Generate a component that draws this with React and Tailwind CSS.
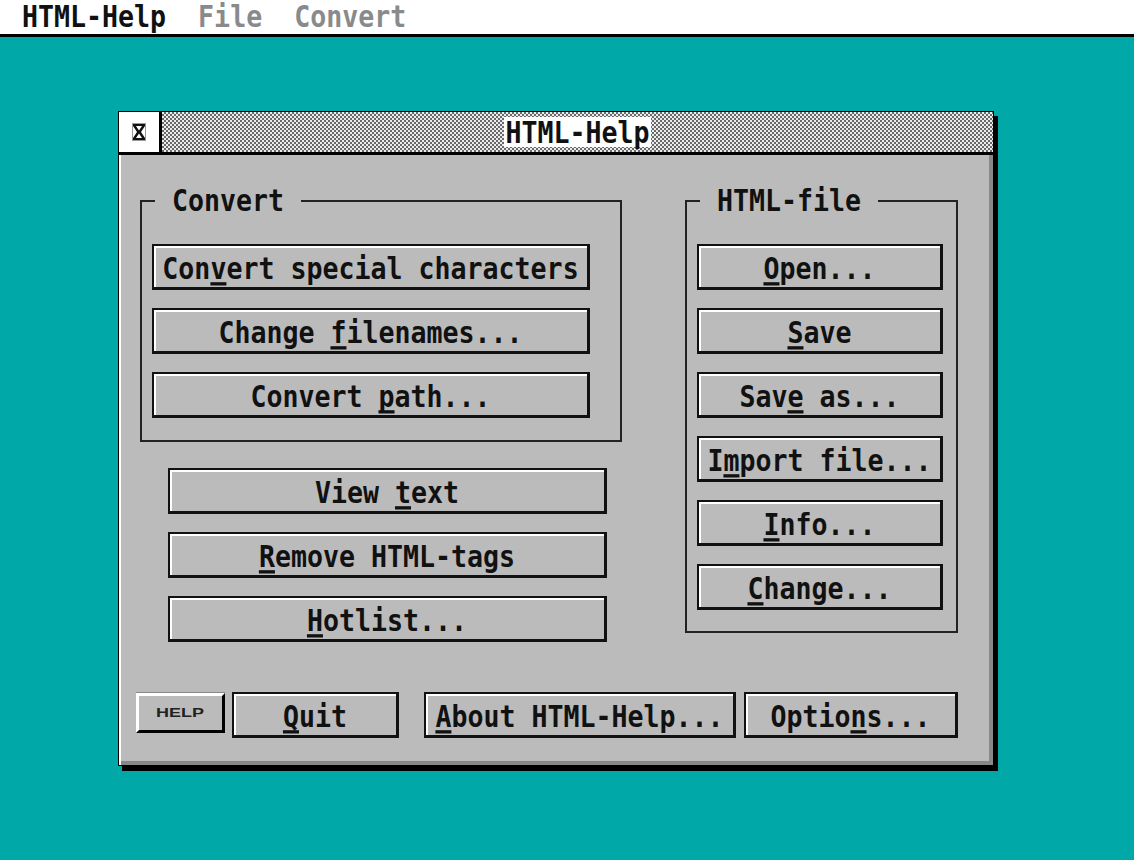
import React from 'react';

const font = "font-['DejaVu_Sans_Mono',monospace] font-bold text-[26.6px]";

function Txt({ text, u = -1 }) {
  const before = u >= 0 ? text.slice(0, u) : text;
  const ch = u >= 0 ? text[u] : '';
  const after = u >= 0 ? text.slice(u + 1) : '';
  return (
    <span className={`${font} inline-block scale-y-110 leading-[28px] whitespace-pre text-[#111]`}>
      {before}
      {ch && (
        <span className="underline decoration-[3px] underline-offset-[3px] [text-decoration-skip-ink:none]">{ch}</span>
      )}
      {after}
    </span>
  );
}

function Btn({ text, u, className = '' }) {
  return (
    <div
      className={`h-[46px] bg-[#bbbbbb] border-[#111] border-t-2 border-l-2 border-r-[3px] border-b-[3px] shadow-[inset_2px_2px_0_#fff] flex items-center justify-center pt-[4px] ${className}`}
    >
      <Txt text={text} u={u} />
    </div>
  );
}

function Group({ label, className = '', children }) {
  return (
    <fieldset className={`border-2 border-[#222] pl-[10px] ${className}`}>
      <legend className="ml-[3px] px-[17px] h-[28px]">
        <Txt text={label} />
      </legend>
      {children}
    </fieldset>
  );
}

function CloseGlyph() {
  return (
    <svg width="14" height="18" viewBox="0 0 14 18">
      <rect x="0.5" y="0.5" width="13" height="17" fill="none" stroke="#999" strokeWidth="1" />
      <path d="M1 1h12v2l-4 6 4 6v2H1v-2l4-6-4-6z" fill="#111" />
      <path d="M4 3h6l-3 4.5z M4 15h6l-3-4.5z" fill="#fff" />
    </svg>
  );
}

export default function App() {
  return (
    <div className="min-h-screen h-[860px] bg-[#00a8a8] overflow-hidden">
      <div className="h-[37px] bg-white border-b-[3px] border-black flex items-center pl-[22px]">
        <Txt text="HTML-Help" />
        <span className="ml-[32px]">
          <span className={`${font} inline-block scale-y-110 leading-[28px] text-[#8a8a8a]`}>File</span>
        </span>
        <span className="ml-[32px]">
          <span className={`${font} inline-block scale-y-110 leading-[28px] text-[#8a8a8a]`}>Convert</span>
        </span>
      </div>

      <div className="ml-[118px] mt-[74px] w-[876px] h-[655px] border border-black shadow-[4px_5px_0_#000] flex flex-col">
        <div className="h-[43px] flex border-b-[3px] border-black">
          <div className="w-[43px] bg-white border-r-[3px] border-black flex items-center justify-center">
            <CloseGlyph />
          </div>
          <div className="flex-1 flex items-center justify-center bg-[repeating-conic-gradient(#6a6a6a_0_25%,#ececec_0_50%)] bg-[length:4px_4px]">
            <div className="h-[30px] bg-white px-[1px] flex items-center pt-[2px]">
              <Txt text="HTML-Help" />
            </div>
          </div>
        </div>

        <div className="flex-1 bg-[#bbbbbb] shadow-[inset_2px_0_0_#fff,inset_-4px_-4px_0_#888] pl-[17px] pt-[32px]">
          <div className="flex ml-[4px]">
            <div className="w-[482px]">
              <Group label="Convert" className="pt-[29px] pb-[22px]">
                <div className="flex flex-col gap-[18px] w-[438px]">
                  <Btn text="Convert special characters" u={3} />
                  <Btn text="Change filenames..." u={7} />
                  <Btn text="Convert path..." u={8} />
                </div>
              </Group>
              <div className="flex flex-col gap-[18px] w-[439px] ml-[28px] mt-[26px]">
                <Btn text="View text" u={5} />
                <Btn text="Remove HTML-tags" u={0} />
                <Btn text="Hotlist..." u={0} />
              </div>
            </div>
            <div className="ml-[63px] w-[273px]">
              <Group label="HTML-file" className="pt-[29px] pb-[21px]">
                <div className="flex flex-col gap-[18px] w-[246px]">
                  <Btn text="Open..." u={0} />
                  <Btn text="Save" u={0} />
                  <Btn text="Save as..." u={3} />
                  <Btn text="Import file..." u={1} />
                  <Btn text="Info..." u={0} />
                  <Btn text="Change..." u={0} />
                </div>
              </Group>
            </div>
          </div>

          <div className="flex items-start mt-[50px]">
            <div className="mt-[1px] w-[89px] h-[40px] bg-[#bbbbbb] border-t-[3px] border-l-[3px] border-white border-r-[3px] border-b-[3px] border-r-black border-b-black shadow-[0_-1px_0_#888] flex items-center justify-center">
              <span className="inline-block scale-x-150 font-['Liberation_Sans',sans-serif] font-bold text-[12px] leading-none text-[#222]">
                HELP
              </span>
            </div>
            <Btn text="Quit" u={0} className="ml-[7px] w-[167px]" />
            <Btn text="About HTML-Help..." u={0} className="ml-[25px] w-[312px]" />
            <Btn text="Options..." u={5} className="ml-[8px] w-[214px]" />
          </div>
        </div>
      </div>
    </div>
  );
}
